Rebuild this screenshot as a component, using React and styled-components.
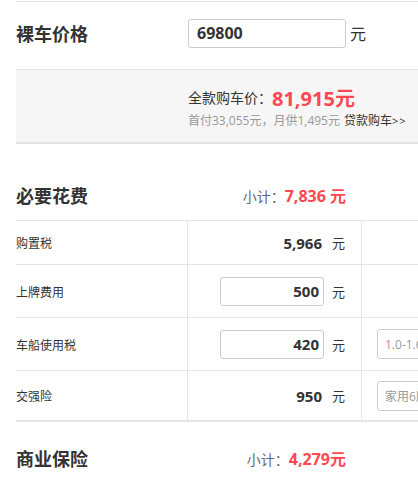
import React from 'react';
import styled, { createGlobalStyle } from 'styled-components';

const Global = createGlobalStyle`
  html, body { margin: 0; padding: 0; background: #fff; overflow: hidden; }
  body {
    font-family: "Open Sans", "Noto Sans CJK SC", sans-serif;
    color: #333;
  }
  * { box-sizing: border-box; }
`;

const Page = styled.div`
  width: 640px;
  padding: 1px 0 0 16px;
`;

const PriceRow = styled.div`
  display: grid;
  grid-template-columns: 172px 158px auto;
  align-items: center;
  height: 69px;
  padding-bottom: 5px;
  border-top: 1px solid #e3e3e3;
  border-bottom: 1px solid #e3e3e3;
`;

const Title = styled.div`
  font-family: "Noto Sans CJK SC", sans-serif;
  font-size: 18px;
  font-weight: 700;
  line-height: 30px;
  color: #333;
`;

const TextInput = styled.input`
  width: ${p => p.$w}px;
  height: 29px;
  border: 1px solid #ccc;
  border-radius: 3px;
  padding: 0 ${p => (p.$right ? 4 : 8)}px;
  font-family: "Open Sans", "Noto Sans CJK SC", sans-serif;
  font-size: ${p => p.$fs}px;
  font-weight: 700;
  color: #333;
  text-align: ${p => (p.$right ? 'right' : 'left')};
  background: #fff;
  outline: none;
`;

const Unit = styled.span`
  font-family: "Noto Sans CJK SC", sans-serif;
  font-size: ${p => p.$fs || 13}px;
  color: #333;
  margin-left: ${p => p.$ml || 0}px;
`;

const Summary = styled.div`
  background: #f6f6f6;
  height: 74px;
  border-bottom: 2px solid #e3e3e3;
  padding: 13px 0 0 172px;
`;

const TotalLine = styled.div`
  display: flex;
  align-items: center;
  height: 28px;
  font-family: "Noto Sans CJK SC", sans-serif;
  font-size: 14px;
  color: #333;
`;

const Red = styled.span`
  font-family: "Open Sans", "Noto Sans CJK SC", sans-serif;
  color: #ff4651;
  font-weight: 700;
  font-size: ${p => p.$fs}px;
  white-space: pre;
`;

const PayLine = styled.div`
  margin-top: 1px;
  height: 18px;
  line-height: 18px;
  font-family: "Open Sans", "Noto Sans CJK SC", sans-serif;
  font-size: 12px;
  color: #999;
  white-space: nowrap;
`;

const LoanLink = styled.a`
  color: #333;
  text-decoration: none;
  margin-left: 4px;
`;

const Arrows = styled.span`
  font-size: 11px;
  letter-spacing: 1px;
`;

const SectionHead = styled.div`
  display: grid;
  grid-template-columns: 171px 174px;
  align-items: center;
  height: ${p => p.$h}px;
  padding-top: ${p => p.$top}px;
  padding-bottom: ${p => p.$h - p.$top - 30}px;
`;

const SubTotal = styled.div`
  text-align: right;
  padding-right: 15px;
  font-family: "Noto Sans CJK SC", sans-serif;
  font-size: 14px;
  color: #666;
  white-space: nowrap;
`;

const Table = styled.div`
  border-top: 1px solid #e5e5e5;
  border-bottom: 2px solid #e5e5e5;
`;

const Row = styled.div`
  display: grid;
  grid-template-columns: 171px 174px 1fr;
  height: ${p => p.$h}px;
  & + & { border-top: 1px solid #e5e5e5; }
`;

const LabelCell = styled.div`
  display: flex;
  align-items: center;
  font-family: "Noto Sans CJK SC", sans-serif;
  font-size: 12px;
  color: #333;
`;

const ValueCell = styled.div`
  display: flex;
  align-items: center;
  justify-content: flex-end;
  gap: 8px;
  padding-right: 16px;
  border-left: 1px solid #e5e5e5;
`;

const Amount = styled.span`
  font-size: 15px;
  font-weight: 700;
  color: #333;
  margin-right: 2px;
`;

const OptionCell = styled.div`
  display: flex;
  align-items: center;
  padding-left: 15px;
  border-left: 1px solid #e5e5e5;
  overflow: hidden;
`;

const Select = styled.div`
  flex: none;
  width: 160px;
  height: 30px;
  border: 1px solid #ccc;
  border-radius: 3px;
  padding-left: 7px;
  display: flex;
  align-items: center;
  font-family: "Open Sans", "Noto Sans CJK SC", sans-serif;
  font-size: 12px;
  color: #999;
  white-space: nowrap;
`;

const rows = [
  { label: '购置税', h: 43, amount: '5,966' },
  { label: '上牌费用', h: 53, input: '500' },
  { label: '车船使用税', h: 53, input: '420', option: '1.0-1.6L(含)' },
  { label: '交强险', h: 50, amount: '950', option: '家用6座以下' },
];

export default function App() {
  return (
    <Page>
      <Global />
      <PriceRow>
        <Title>裸车价格</Title>
        <TextInput $w={158} $fs={16} defaultValue="69800" />
        <Unit $fs={16} $ml={4}>元</Unit>
      </PriceRow>
      <Summary>
        <TotalLine>
          全款购车价：<Red $fs={20}>81,915元</Red>
        </TotalLine>
        <PayLine>
          首付33,055元，月供1,495元
          <LoanLink href="#">贷款购车<Arrows>&gt;&gt;</Arrows></LoanLink>
        </PayLine>
      </Summary>
      <SectionHead $h={76} $top={36}>
        <Title>必要花费</Title>
        <SubTotal>
          小计：<Red $fs={16}>7,836 元</Red>
        </SubTotal>
      </SectionHead>
      <Table>
        {rows.map(r => (
          <Row key={r.label} $h={r.h}>
            <LabelCell>{r.label}</LabelCell>
            <ValueCell>
              {r.input ? (
                <TextInput $w={104} $fs={15} $right defaultValue={r.input} />
              ) : (
                <Amount>{r.amount}</Amount>
              )}
              <Unit>元</Unit>
            </ValueCell>
            <OptionCell>{r.option && <Select>{r.option}</Select>}</OptionCell>
          </Row>
        ))}
      </Table>
      <SectionHead $h={60} $top={21}>
        <Title>商业保险</Title>
        <SubTotal>
          小计：<Red $fs={16}>4,279元</Red>
        </SubTotal>
      </SectionHead>
    </Page>
  );
}
